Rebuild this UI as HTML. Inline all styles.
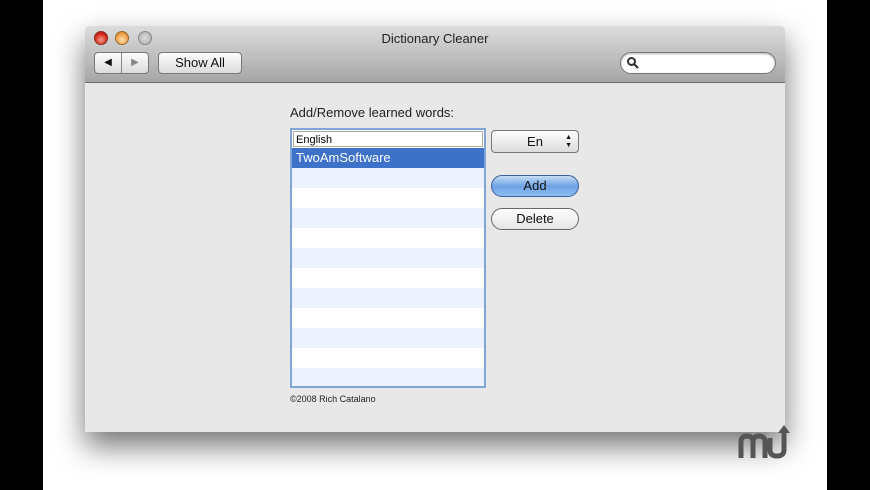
<!DOCTYPE html>
<html><head><style>
body{margin:0;width:870px;height:490px;background:#000;position:relative;overflow:hidden;font-family:"Liberation Sans",sans-serif}
.bg{position:absolute;left:43px;top:0;width:784px;height:490px;background:#fff}
.win{position:absolute;left:85px;top:26px;width:700px;height:406px;background:#e8e8e8;box-shadow:0 14px 30px rgba(0,0,0,.55);border-radius:5px 5px 0 0}
.tb{position:absolute;left:0;top:0;width:700px;height:56px;background:linear-gradient(#dcdcdc,#a6a6a6);border-bottom:1px solid #6c6c6c;border-radius:5px 5px 0 0}
.dot{position:absolute;top:5px;width:14px;height:14px;border-radius:50%;box-sizing:border-box}
.t{position:absolute;font-size:13px;color:#222}
.btn{position:absolute;background:linear-gradient(#fdfdfd,#dcdcdc);border:1px solid #777;border-radius:4px;font-size:13px;text-align:center;color:#111}
.rb{position:absolute;border:1px solid #666;border-radius:12px;background:linear-gradient(#fff,#e4e4e4);font-size:13px;text-align:center;color:#111}
.row{position:absolute;left:2px;width:190px;height:20px}
</style></head><body>
<div class="bg"></div>
<div class="win">
<div class="tb">
<div class="dot" style="left:9px;background:radial-gradient(circle at 50% 65%,#f0a090,#d6281c 60%,#a01810);border:1px solid #8a2a20"></div>
<div class="dot" style="left:30px;background:radial-gradient(circle at 50% 65%,#fde0b0,#f0a048 60%,#c07020);border:1px solid #9a6a30"></div>
<div class="dot" style="left:53px;background:radial-gradient(#dedede,#a8a8a8);border:1px solid #888"></div>
<div class="t" style="left:0;width:700px;text-align:center;top:5px;font-size:13px">Dictionary Cleaner</div>
<div class="btn" style="left:9px;top:26px;width:53px;height:20px"><span style="position:absolute;left:0;top:0;width:26px;height:20px;border-right:1px solid #888;font-size:10px;line-height:20px">◀</span><span style="position:absolute;left:27px;top:0;width:26px;line-height:20px;font-size:10px;color:#888">▶</span></div>
<div class="btn" style="left:73px;top:26px;width:82px;height:20px;line-height:20px">Show All</div>
<div style="position:absolute;left:535px;top:26px;width:154px;height:20px;border-radius:11px;background:#fff;border:1px solid #777;box-shadow:inset 0 1px 2px rgba(0,0,0,.3)"><svg width="14" height="14" style="position:absolute;left:5px;top:3px"><circle cx="5.5" cy="5.5" r="3.5" fill="none" stroke="#333" stroke-width="2"/><path d="M8 8l4 4" stroke="#333" stroke-width="2.2"/></svg></div>
</div>
<div class="t" style="left:205px;top:79px">Add/Remove learned words:</div>
<div style="position:absolute;left:205px;top:102px;width:192px;height:256px;border:2px solid #7fa6d6;background:#fff;overflow:hidden">
<div style="position:absolute;left:1px;top:1px;height:16px;border:1px solid #aaa;font-size:11px;line-height:16px;padding-left:2px;box-sizing:border-box;width:190px">English</div>
<div class="row" style="top:18px;left:0;width:192px;background:#3d72c8;color:#fff;font-size:13px;line-height:20px;padding-left:4px;box-sizing:border-box">TwoAmSoftware</div>
<div class="row" style="top:38px;left:0;width:192px;background:#edf3fe"></div>
<div class="row" style="top:78px;left:0;width:192px;background:#edf3fe"></div>
<div class="row" style="top:118px;left:0;width:192px;background:#edf3fe"></div>
<div class="row" style="top:158px;left:0;width:192px;background:#edf3fe"></div>
<div class="row" style="top:198px;left:0;width:192px;background:#edf3fe"></div>
<div class="row" style="top:238px;left:0;width:192px;background:#edf3fe"></div>
</div>
<div class="btn" style="left:406px;top:104px;width:86px;height:21px;line-height:21px">En<span style="position:absolute;right:6px;top:0;font-size:7px;line-height:8px;padding-top:3px">▲<br>▼</span></div>
<div class="rb" style="left:406px;top:149px;width:86px;height:20px;line-height:20px;background:linear-gradient(#c8def7,#6ea3e4 50%,#8cbcf0);border-color:#3c5f96">Add</div>
<div class="rb" style="left:406px;top:182px;width:86px;height:20px;line-height:20px">Delete</div>
<div class="t" style="left:205px;top:368px;font-size:9px">©2008 Rich Catalano</div>
</div>
<svg style="position:absolute;left:737px;top:422px" width="60" height="40"><path d="M4 36V20q0-6 6-6t6 6v16M16 20q0-6 6-6t6 6v16" fill="none" stroke="#555" stroke-width="5"/><path d="M33 16v12q0 6 7 6t7-6V10" fill="none" stroke="#555" stroke-width="5"/><path d="M41 11l6-8 6 8z" fill="#555"/></svg>
</body></html>
